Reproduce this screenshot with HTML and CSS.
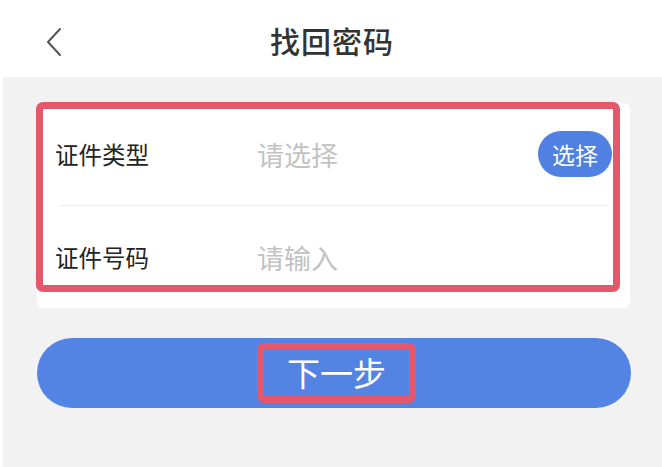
FILE: index.html
```html
<!DOCTYPE html>
<html lang="zh-CN">
<head>
<meta charset="utf-8">
<link rel="stylesheet" href="styles.css">
</head>
<body>
<div class="page">
  <header class="topbar">
    <span class="back">
      <svg width="20" height="30" viewBox="0 0 20 30"><path d="M16 2 L4 15 L16 28" fill="none" stroke="#555" stroke-width="2" stroke-linejoin="round" stroke-linecap="round"/></svg>
    </span>
    <h1 class="title">找回密码</h1>
  </header>
  <main class="content">
    <section class="card">
      <div class="row">
        <span class="label">证件类型</span>
        <span class="placeholder">请选择</span>
        <span class="pill">选择</span>
      </div>
      <div class="divider"></div>
      <div class="row">
        <span class="label">证件号码</span>
        <span class="placeholder">请输入</span>
      </div>
      <div class="mark"></div>
    </section>
    <button class="next"><span class="next-text">下一步</span></button>
  </main>
</div>
</body>
</html>
```
FILE: styles.css
```css
* { box-sizing: border-box; }
html, body { margin: 0; padding: 0; background: #fff; }
body { font-family: "Noto Sans CJK SC", "Noto Sans", sans-serif; width: 662px; height: 467px; overflow: hidden; }
.page { display: flex; flex-direction: column; height: 467px; }
.topbar { height: 77px; display: flex; align-items: center; justify-content: center; position: relative; background: #fff; }
.back { position: absolute; left: 44px; top: 27px; width: 20px; height: 30px; display: flex; }
.title { margin: 0; font-size: 30px; font-weight: 500; color: #333; line-height: 1; letter-spacing: 1px; padding-top: 2px; padding-left: 2px; }
.content { flex: 1; background: #f2f2f2; margin-left: 3px; padding: 26px 32px 0 34px; display: flex; flex-direction: column; }
.card { position: relative; background: #fff; border-radius: 6px; }
.row { height: 102px; display: flex; align-items: center; padding: 0 18px 0 18px; }
.label { width: 202px; font-size: 23.5px; color: #222; }
.placeholder { flex: 1; font-size: 27px; color: #c2c2c2; }
.pill { width: 74px; height: 46px; border-radius: 23px; background: #4f80e2; color: #fff; font-size: 23px; display: flex; align-items: center; justify-content: center; }
.divider { height: 1px; background: #ececec; margin: 0 21px 0 23px; }
.mark { position: absolute; left: -1px; top: -1px; width: 584px; height: 190px; border: 7px solid #e5586b; border-radius: 7px; pointer-events: none; }
.next { margin-top: 30px; height: 70px; width: 594px; border: none; border-radius: 35px; background: #5384e4; display: flex; align-items: center; justify-content: center; padding: 0; font-family: inherit; }
.next-text { display: inline-block; border: 7px solid #e5586b; border-radius: 7px; height: 60px; line-height: 44px; padding: 0 23px; color: #fff; font-size: 33px; margin-left: 5px; }
```
